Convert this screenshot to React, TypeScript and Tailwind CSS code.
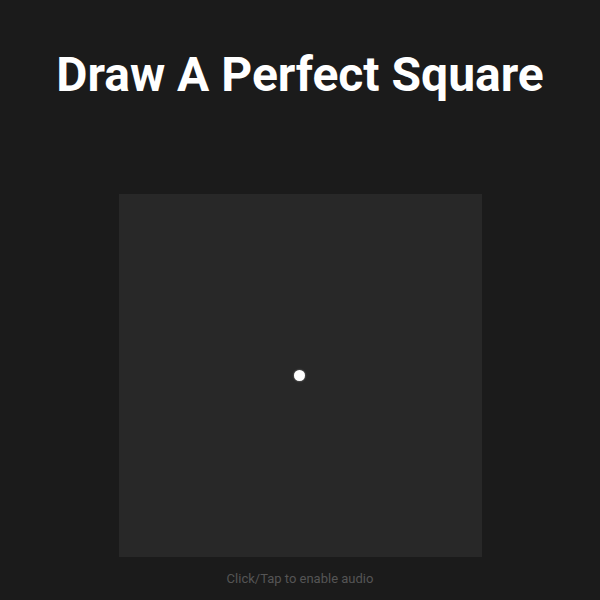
export default function App() {
  return (
    <div
      className="flex h-[600px] w-[600px] flex-col items-center overflow-hidden bg-[#1b1b1b]"
      style={{ fontFamily: "Roboto, 'Liberation Sans', sans-serif" }}
    >
      <h1 className="mt-[47px] text-[48px] font-bold leading-[56px] text-white">
        Draw A Perfect Square
      </h1>
      <div className="mt-[91px] flex h-[363px] w-[363px] items-center justify-center bg-[#282828]">
        <div className="ml-[-2px] h-[11px] w-[11px] rounded-full bg-white shadow-[0_0_2px_rgba(255,255,255,0.5)]" />
      </div>
      <p className="mt-[14px] text-[13px] leading-[15px] text-[#555555]">
        Click/Tap to enable audio
      </p>
    </div>
  );
}
